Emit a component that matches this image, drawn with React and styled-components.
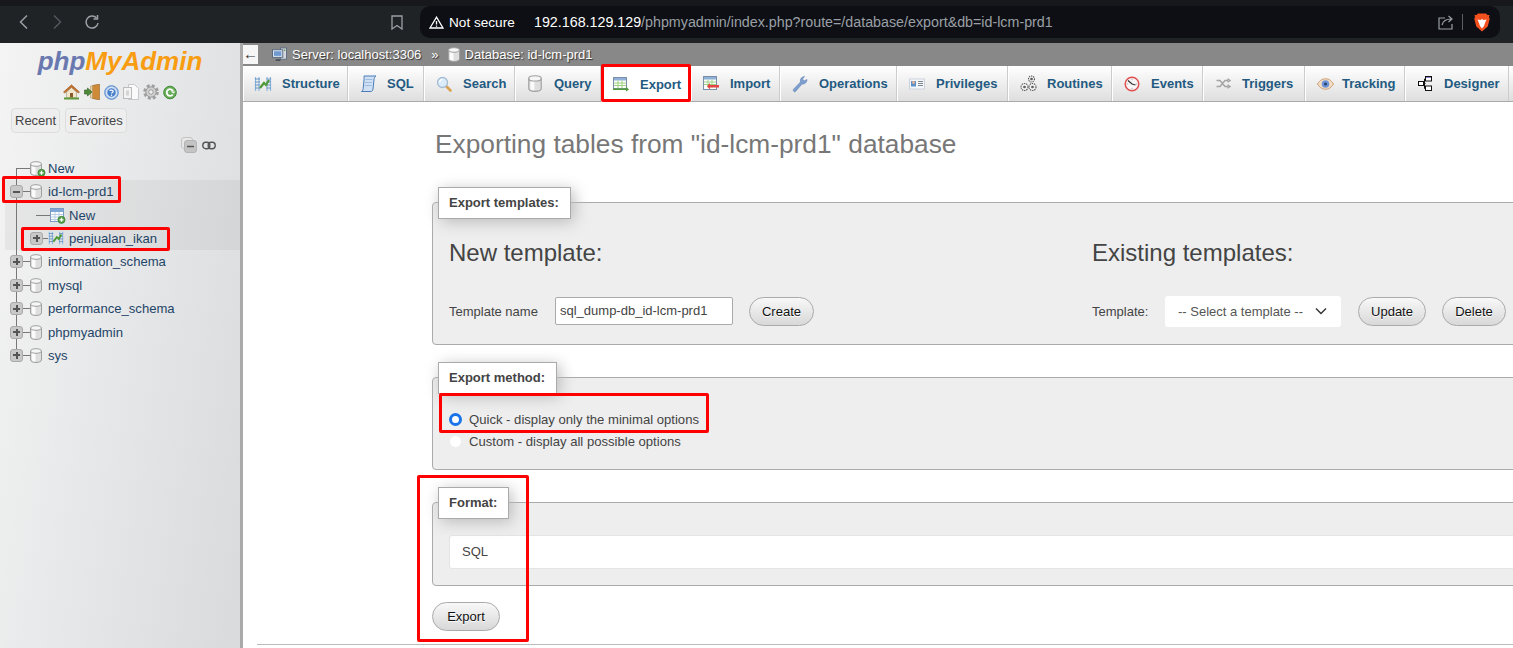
import styled, { createGlobalStyle } from "styled-components";

const GlobalStyle = createGlobalStyle`
  html, body {
    margin: 0;
    padding: 0;
    height: 100%;
    overflow: hidden;
    background: #fff;
    font-family: "Liberation Sans", Arial, sans-serif;
  }
  * { box-sizing: border-box; }
`;

/* ---------- drawn icons ---------- */

const DbIcon = ({ size = 15 }) => (
  <svg width={size - 3} height={size} viewBox="0 0 12 15">
    <path d="M.5 3v9c0 1.4 2.5 2.500 5.500 2.500s5.500-1.100 5.500-2.500V3z" fill="#dedede" stroke="#a0a0a0" />
    <path d="M2 4v8.500c1 .8 2.500 1 3.500 1V4z" fill="#fbfbfb" />
    <ellipse cx="6" cy="3" rx="5.500" ry="2.300" fill="#f6f6f6" stroke="#a0a0a0" />
  </svg>
);

const PlusBadge = () => (
  <svg width="16" height="16" viewBox="0 0 16 16" style={{ position: "absolute", left: 0, top: 0 }}>
    <circle cx="11.500" cy="11.800" r="3.600" fill="#4f9e45" stroke="#2f7a2a" strokeWidth=".6" />
    <path d="M9.500 11.800h4M11.500 9.800v4" stroke="#fff" strokeWidth="1.300" />
  </svg>
);

const TableIcon = () => (
  <svg width="14" height="14" viewBox="0 0 14 14">
    <rect x=".5" y=".5" width="13" height="13" fill="#fff" stroke="#7a9cc4" />
    <rect x="1" y="1" width="12" height="3" fill="#7fa6d6" />
    <path d="M1 6.500h12M1 9h12M1 11.500h12M5 4v9M9 4v9" stroke="#b6cde6" />
  </svg>
);

const StructureIcon = () => (
  <svg width="18" height="16" viewBox="0 0 18 16">
    <path d="M1.500 1v14M5 1v14M13 1v14M16.500 1v14" stroke="#8fb8e0" strokeWidth="1.200" />
    <path d="M1 3h5M1 6h5M1 9h5M1 12h5M12.500 3h4.500M12.500 6h4.500M12.500 9h4.500M12.500 12h4.500" stroke="#5b8cc0" strokeWidth=".9" />
    <path d="M6 12l4-5 2 2 3-5" stroke="#4f9a38" strokeWidth="2.200" fill="none" />
  </svg>
);

const SqlIcon = () => (
  <svg width="17" height="17" viewBox="0 0 17 17">
    <path d="M4 1h12c-1.500 1-1.800 2-2 4l-1 9c-.2 1.500-1 2.500-2 2.500H1.500c1-.5 1.500-1.500 1.700-3L4 5C4.200 3 4 2 4 1z" fill="#cfe0f4" stroke="#4b7db8" />
    <path d="M5.500 4.500h7M5 7.500h7M4.700 10.500h7" stroke="#9dbce0" />
  </svg>
);

const SearchIcon = () => (
  <svg width="16" height="16" viewBox="0 0 16 16">
    <path d="M10 10l4.500 4.500" stroke="#d8a050" strokeWidth="2.600" strokeLinecap="round" />
    <circle cx="6.500" cy="6.500" r="5" fill="#dcecfa" stroke="#a4bcd4" strokeWidth="1.300" />
    <path d="M3.500 6c.4-1.500 1.500-2.500 3-2.600" stroke="#fff" strokeWidth="1.200" fill="none" />
  </svg>
);

const ExportIcon = () => (
  <svg width="16" height="15" viewBox="0 0 16 15">
    <rect x=".5" y=".5" width="13" height="11" fill="#fff" stroke="#7c8fa8" />
    <rect x="1" y="1" width="12" height="2.500" fill="#8fb0d8" />
    <path d="M1 6h12M1 8.500h12M5 3.500v8M9 3.500v8" stroke="#9ed07f" />
    <path d="M0 11.500h13v-2l3 3-3 2v-1.500H0z" fill="#4f9a38" />
  </svg>
);

const ImportIcon = () => (
  <svg width="16" height="15" viewBox="0 0 16 15">
    <rect x=".5" y=".5" width="13" height="13" fill="#fff" stroke="#7c8fa8" />
    <rect x="1" y="1" width="12" height="2.500" fill="#8fb0d8" />
    <path d="M1 6h12M1 8.500h12M5 3.500v8M9 3.500v8" stroke="#9ed07f" />
    <path d="M16 9H7V7l-3 3.300L7 13.500V11.500h9z" fill="#e64545" />
  </svg>
);

const OperationsIcon = () => (
  <svg width="16" height="18" viewBox="0 0 16 18">
    <path d="M2 16.500c-1-1-1-1.800-.2-2.600L8.500 7C8 4.500 9 2 12.500 1.500L10.500 4l1.500 2 3-1.500C15 7.500 12.500 9.500 10 9l-6.500 7.500c-.5.500-1 .5-1.500 0z" fill="#7d9fd0" stroke="#5f7fb0" strokeWidth=".6" />
  </svg>
);

const PrivilegesIcon = () => (
  <svg width="16" height="12" viewBox="0 0 16 12">
    <rect x=".5" y="1" width="15" height="10" fill="#f4f6fa" stroke="#ccd2dc" />
    <rect x="2" y="3" width="5" height="5.500" fill="#5d8fc8" />
    <circle cx="4.500" cy="4.500" r="1.400" fill="#e8b48c" />
    <path d="M9 3.500h5M9 5.500h5M9 7.500h5" stroke="#7d8794" />
  </svg>
);

const RoutinesIcon = () => (
  <svg width="17" height="17" viewBox="0 0 17 17" fill="#f2f2f2" stroke="#555" strokeWidth="1.100">
    <circle cx="11.500" cy="4" r="3" strokeDasharray="1.400 .8" />
    <circle cx="4.500" cy="12" r="3.500" strokeDasharray="1.400 .8" />
    <circle cx="12.500" cy="12" r="3.500" strokeDasharray="1.400 .8" />
    <circle cx="11.500" cy="4" r=".8" />
    <circle cx="4.500" cy="12" r=".8" />
    <circle cx="12.500" cy="12" r=".8" />
  </svg>
);

const EventsIcon = () => (
  <svg width="16" height="16" viewBox="0 0 16 16">
    <circle cx="8" cy="8" r="6.800" fill="#f7f7f7" stroke="#e05050" strokeWidth="1.500" />
    <path d="M8 2.800v1.400M8 11.800v1.400M2.800 8h1.400M11.800 8h1.400" stroke="#aaa" />
    <path d="M4 4.500L8 8l3.500 1" stroke="#333" strokeWidth="1.300" fill="none" />
  </svg>
);

const TriggersIcon = () => (
  <svg width="15" height="11" viewBox="0 0 15 11" fill="none" stroke="#a4a4a4" strokeWidth="1.500">
    <path d="M.5 2.500h3.500l5 6h3M.5 8.500h3.500l5-6h3" />
    <path d="M11.500.8l2.500 1.700-2.500 1.700M11.500 6.800l2.500 1.700-2.500 1.700" />
  </svg>
);

const TrackingIcon = () => (
  <svg width="17" height="12" viewBox="0 0 17 12">
    <path d="M.5 6C3 2 5.500.8 8.500.8S14 2 16.500 6c-2.500 4-5 5.200-8 5.200S3 10 .5 6z" fill="#f3ddc4" stroke="#c89a72" />
    <circle cx="8.500" cy="6" r="3.800" fill="#6f94d6" />
    <circle cx="8.500" cy="6" r="1.500" fill="#26406e" />
  </svg>
);

const DesignerIcon = () => (
  <svg width="14" height="15" viewBox="0 0 14 15" fill="#fff" stroke="#111">
    <rect x="7.500" y=".5" width="6" height="4.500" />
    <rect x=".5" y="5.500" width="5" height="4" />
    <rect x="7.500" y="10" width="6" height="4.500" />
    <path d="M5.500 7.500h2M6.500 3v9.500h1M6.500 3h1" fill="none" />
    <rect x="8" y="1" width="5" height="1" fill="#8a86c8" stroke="none" />
  </svg>
);

const ServerIcon = () => (
  <svg width="15" height="15" viewBox="0 0 16 15">
    <rect x="9" y=".5" width="6.500" height="12" fill="#d4d8de" stroke="#5c6c80" />
    <rect x=".5" y="2.500" width="11" height="8" fill="#e8eef6" stroke="#53657c" />
    <rect x="2" y="4" width="8" height="5" fill="#6f9ad0" />
    <path d="M4 13.500h5" stroke="#3a4654" strokeWidth="1.600" />
    <circle cx="13.500" cy="3" r=".8" fill="#4f9a38" />
  </svg>
);

const HomeIcon = () => (
  <svg width="17" height="16" viewBox="0 0 17 16">
    <path d="M3.500 8l5-4.500 5 4.500v5.500h-10z" fill="#f2e6cc" stroke="#a89878" strokeWidth=".6" />
    <path d="M8.500 .8L.5 8l1.200 1 6.800-5.800L15.300 9l1.200-1z" fill="#c9742c" stroke="#8a4a18" strokeWidth=".5" />
    <rect x="7" y="9" width="3" height="4.500" fill="#8a5a2a" />
    <rect x="1" y="13.500" width="15" height="2" fill="#5e9a3a" />
  </svg>
);

const LogoutIcon = () => (
  <svg width="16" height="16" viewBox="0 0 16 16">
    <path d="M8.500 1.500L15.500 0v16l-7-1.500z" fill="#cf8a38" stroke="#8a5518" strokeWidth=".5" />
    <path d="M8.500 2h-2v12h2z" fill="#e9d4a8" stroke="#a88858" strokeWidth=".5" />
    <path d="M.5 6h3V4L8 8l-4.500 4v-2h-3z" fill="#4f8a3a" stroke="#2c5c20" strokeWidth=".6" />
  </svg>
);

const HelpIcon = () => (
  <svg width="15" height="15" viewBox="0 0 15 15">
    <circle cx="7.500" cy="7.500" r="6.800" fill="#a8c6ec" stroke="#5a88c8" />
    <circle cx="7.500" cy="7.500" r="4.800" fill="#4a80cc" stroke="#fff" />
    <path d="M5.800 6c.2-1.200 3.400-1.400 3.400.3 0 1.200-1.700 1.100-1.700 2.300" stroke="#fff" strokeWidth="1.200" fill="none" />
    <rect x="6.900" y="9.600" width="1.200" height="1.300" fill="#fff" />
  </svg>
);

const DocsIcon = () => (
  <svg width="16" height="16" viewBox="0 0 16 16">
    <path d="M5.500.5h6l4 4v11h-10z" fill="#fafafa" stroke="#c8c8c8" />
    <rect x=".5" y="3.500" width="8" height="11" fill="#f4f4f4" stroke="#bcbcbc" />
    <rect x="3" y="6.500" width="3" height="5" fill="#d4d4d4" />
  </svg>
);

const GearIcon = () => (
  <svg width="16" height="16" viewBox="0 0 16 16">
    <circle cx="8" cy="8" r="6.500" fill="none" stroke="#a0a0a0" strokeWidth="2.600" strokeDasharray="3 2.100" />
    <circle cx="8" cy="8" r="5.200" fill="#cfcfcf" stroke="#8c8c8c" strokeWidth=".8" />
    <circle cx="8" cy="8" r="2.200" fill="#f0f0f0" stroke="#8c8c8c" strokeWidth=".8" />
  </svg>
);

const ReloadIcon = () => (
  <svg width="14" height="15" viewBox="0 0 14 15">
    <circle cx="7" cy="7.500" r="6.300" fill="#67ad58" stroke="#3f8a34" />
    <path d="M10 6a3.300 3.300 0 1 0-.3 3.500" stroke="#fff" strokeWidth="1.800" fill="none" />
    <path d="M7.500 6.500h5v-1l-1.500 3z" fill="#fff" />
  </svg>
);

const CollapseIcon = () => (
  <svg width="16" height="16" viewBox="0 0 16 16">
    <rect x=".5" y=".5" width="11" height="11" rx="2.500" fill="#e8e8e8" stroke="#c4c4c4" />
    <rect x="3.500" y="3.500" width="12" height="12" rx="2.500" fill="#c4c4c4" stroke="#b4b4b4" />
    <path d="M6 9.500h7" stroke="#555" strokeWidth="1.500" />
  </svg>
);

const LinkIcon = () => (
  <svg width="14" height="9" viewBox="0 0 14 9" fill="none" stroke="#555" strokeWidth="1.400">
    <rect x=".8" y="1.300" width="7" height="6.400" rx="3" />
    <rect x="6.200" y="1.300" width="7" height="6.400" rx="3" />
  </svg>
);

const BraveIcon = () => (
  <svg width="16" height="19" viewBox="0 0 16 19">
    <path d="M4 .5h8l1.500 1.600L15.500 2 15 4l.7 2-2 7.500L8 18.500l-5.700-5L.3 6 1 4 .5 2l2 .1z" fill="#f4511e" />
    <path d="M3.500 6.500L6.500 7 8 6l1.500 1 3-.5L11 10l-1 3H6l-1-3z" fill="#fff" />
    <path d="M6 13l2 2.500 2-2.500z" fill="#fff" />
  </svg>
);

/* ---------- browser bar ---------- */

const Chrome = styled.header`
  height: 43px;
  background: #202326;
  border-top: 6px solid #16181b;
  display: flex;
  align-items: flex-start;
  color: #9aa0a6;
`;

const NavIcons = styled.div`
  width: 420px;
  height: 32px;
  display: flex;
  align-items: center;
`;

const NavButton = styled.svg`
  margin-left: ${({ $left }) => $left}px;
  flex: none;
`;

const UrlBar = styled.div`
  width: 1080px;
  height: 32px;
  background: #0e0f14;
  border-radius: 10px;
  display: flex;
  align-items: center;
  padding: 0 10px 0 9px;
`;

const NotSecure = styled.span`
  color: #fff;
  font-size: 13.600px;
  margin-left: 5px;
  width: 85px;
  flex: none;
  white-space: nowrap;
`;

const Url = styled.span`
  color: #9aa0a6;
  font-size: 14.280px;
  white-space: nowrap;
  flex: 1;

  b {
    color: #fff;
    font-weight: 400;
  }
`;

const UrlDivider = styled.span`
  width: 1px;
  height: 16px;
  background: #5c6066;
  margin: 0 11px 0 8px;
`;

/* ---------- page shell ---------- */

const Page = styled.div`
  position: relative;
  width: 1513px;
  height: 648px;
  overflow: hidden;
`;

const Body = styled.div`
  display: flex;
  height: 605px;
`;

const Sidebar = styled.aside`
  width: 243px;
  flex: none;
  background: linear-gradient(100deg, #f4f4f4, #d8dadc);
  border-right: 3px solid #aaa;
  display: flex;
  flex-direction: column;
  color: #235a81;
`;

const Logo = styled.div`
  height: 36px;
  text-align: center;
  font: italic 700 26px/36px "Liberation Sans", Arial, sans-serif;
  color: #f89d12;

  span {
    color: #6a78b0;
  }
`;

const NavLinks = styled.div`
  display: flex;
  justify-content: center;
  align-items: center;
  gap: 4px;
  height: 18px;
  margin-top: 4px;
`;

const SideTabs = styled.div`
  display: flex;
  gap: 5px;
  padding-left: 11px;
  margin-top: 7px;
`;

const SideTab = styled.div`
  height: 25px;
  padding: 0 3px;
  line-height: 23px;
  font-size: 13px;
  color: #444;
  background: #eee;
  border: 1px solid #ddd;
  border-radius: 4px;
`;

const TreeTools = styled.div`
  display: flex;
  align-items: center;
  justify-content: flex-end;
  gap: 5px;
  height: 18px;
  margin-top: 3px;
  padding-right: 24px;
`;

const Tree = styled.div`
  margin-top: 2.600px;
`;

const ExpandedGroup = styled.div`
  margin-left: 5px;
  background: rgba(0, 0, 0, 0.045);
`;

const TreeRow = styled.div`
  position: relative;
  height: 23.400px;
  display: flex;
  align-items: center;
  padding-left: ${({ $indent }) => $indent}px;
  font-size: 13.100px;
  color: #1e4568;
  white-space: nowrap;

  &::before {
    content: "";
    position: absolute;
    left: ${({ $lineX }) => $lineX}px;
    top: ${({ $lineTop }) => $lineTop}px;
    bottom: ${({ $lineBottom }) => $lineBottom}px;
    width: 1px;
    background: #777;
  }
`;

const Expander = styled.span`
  position: relative;
  z-index: 1;
  width: 13px;
  height: 13px;
  flex: none;
  background: #c8c8c8;
  border: 1px solid #aaa;
  border-radius: 3px;

  &::before {
    content: "";
    position: absolute;
    left: 2px;
    right: 2px;
    top: 4.500px;
    height: 2px;
    background: #555;
  }

  &::after {
    content: "";
    display: ${({ $open }) => ($open ? "none" : "block")};
    position: absolute;
    top: 2px;
    bottom: 2px;
    left: 4.500px;
    width: 2px;
    background: #555;
  }
`;

const Connector = styled.span`
  width: ${({ $w }) => $w}px;
  height: 1px;
  background: #777;
  flex: none;
`;

const NodeIcon = styled.span`
  position: relative;
  display: flex;
  flex: none;
  width: ${({ $w }) => $w}px;
  margin-right: ${({ $gap }) => $gap}px;
`;

/* ---------- right side ---------- */

const Main = styled.main`
  flex: 1;
  min-width: 0;
  overflow: hidden;
`;

const TopBar = styled.div`
  height: 23px;
  background: #888;
  display: flex;
  align-items: center;
  color: #fff;
  font-size: 13px;
  text-shadow: 1px 1px 1px #333;
  white-space: nowrap;
`;

const BackArrow = styled.span`
  width: 15px;
  height: 19px;
  background: #f6f6f6;
  color: #333;
  font-size: 15px;
  line-height: 18px;
  text-align: center;
  text-shadow: none;
  margin-right: 14px;
`;

const TopItem = styled.span`
  display: flex;
  align-items: center;
  gap: 5px;
  margin-right: ${({ $gap }) => $gap}px;
`;

const Tabs = styled.nav`
  display: flex;
  height: 36px;
  background: linear-gradient(#fff, #dedede);
  border-bottom: 1px solid #aaa;
`;

const Tab = styled.a`
  flex: none;
  display: flex;
  align-items: center;
  width: ${({ $w }) => $w}px;
  padding-left: 9px;
  font-size: 13px;
  font-weight: 700;
  color: #235a81;
  white-space: nowrap;
  border-right: 1px solid #ccc;
  box-shadow: inset 1px 0 0 #fff;
  background: ${({ $active }) => ($active ? "#fff" : "transparent")};
  height: ${({ $active }) => ($active ? "36px" : "auto")};
`;

const TabIcon = styled.span`
  width: 22px;
  flex: none;
  display: flex;
  justify-content: center;
  margin-right: ${({ $gap = 8 }) => $gap}px;
`;

const Content = styled.div`
  padding-left: 189px;
  width: 1500px;
`;

const Title = styled.h2`
  margin: 0;
  padding: 27px 0 0 3px;
  font-size: 26.300px;
  font-weight: 400;
  line-height: 30px;
  color: #777;
`;

const Fieldset = styled.section`
  height: ${({ $h }) => $h}px;
  margin-top: ${({ $top }) => $top}px;
  background: #eee;
  border: 1px solid #aaa;
  border-radius: 4px 0 0 4px;
  padding: 0 16px;
`;

const Legend = styled.div`
  display: inline-block;
  height: 32px;
  line-height: 29px;
  margin: -16px 0 0 -11px;
  padding: 0 11px 0 10px;
  background: #fff;
  border: 1px solid #aaa;
  font-size: 13px;
  font-weight: 700;
  color: #444;
  box-shadow: 3px 3px 15px #bbb;
  vertical-align: top;
`;

const TemplateColumns = styled.div`
  display: flex;
  margin-top: 18px;
`;

const TemplateColumn = styled.div`
  width: ${({ $w }) => $w}px;
  flex: none;
`;

const SubTitle = styled.h3`
  margin: 0;
  font-size: 24px;
  font-weight: 400;
  line-height: 28px;
  color: #444;
`;

const FormRow = styled.div`
  display: flex;
  align-items: center;
  height: 32px;
  margin-top: 28px;
  font-size: 13px;
  color: #444;
`;

const RowLabel = styled.span`
  width: ${({ $w }) => $w}px;
  flex: none;
`;

const TextInput = styled.div`
  width: 178px;
  height: 28px;
  line-height: 26px;
  padding-left: 4px;
  background: #fff;
  border: 1px solid #aaa;
  border-radius: 2px;
  font-size: 13px;
  color: #444;
`;

const Select = styled.div`
  width: 176px;
  height: 31px;
  display: flex;
  align-items: center;
  justify-content: space-between;
  padding: 0 14px 0 13px;
  background: #fff;
  border-radius: 3px;
  font-size: 13px;
  color: #555;
`;

const Button = styled.div`
  display: flex;
  align-items: center;
  justify-content: center;
  width: ${({ $w }) => $w}px;
  height: 29px;
  margin-left: ${({ $left = 0 }) => $left}px;
  flex: none;
  background: linear-gradient(#f8f8f8, #d8d8d8);
  border: 1px solid #aaa;
  border-radius: 15px;
  font-size: 13px;
  color: #111;
  text-shadow: 0 1px 0 #fff;
`;

const RadioList = styled.div`
  margin-top: 12px;
  font-size: 13.100px;
  color: #444;
`;

const RadioRow = styled.label`
  display: flex;
  align-items: center;
  gap: 7px;
  height: 22px;
`;

const Radio = styled.span`
  width: 13px;
  height: 13px;
  border-radius: 50%;
  flex: none;
  background: #fff;
  border: ${({ $on }) => ($on ? "3.500px solid #1a73e8" : "1px solid #eee")};
`;

const FormatValue = styled.div`
  height: 34px;
  margin-top: 14px;
  padding-left: 12px;
  line-height: 32px;
  background: #fff;
  border: 1px solid #e4e4e4;
  border-radius: 3px;
  font-size: 13px;
  color: #444;
`;

const ExportRow = styled.div`
  margin-top: 16px;
`;

const Rule = styled.hr`
  margin: 13px 0 0 -175px;
  border: 0;
  border-top: 1px solid #bbb;
`;

/* red boxes drawn over the screenshot */
const Mark = styled.div`
  position: absolute;
  left: ${({ $x }) => $x}px;
  top: ${({ $y }) => $y}px;
  width: ${({ $w }) => $w}px;
  height: ${({ $h }) => $h}px;
  border: 3px solid #f00;
  border-radius: 2px;
  pointer-events: none;
`;

const TABS = [
  { label: "Structure", width: 105, icon: <StructureIcon /> },
  { label: "SQL", width: 76, icon: <SqlIcon /> },
  { label: "Search", width: 91, icon: <SearchIcon /> },
  { label: "Query", width: 86, icon: <DbIcon size={17} /> },
  { label: "Export", width: 90, icon: <ExportIcon />, active: true },
  { label: "Import", width: 89, icon: <ImportIcon /> },
  { label: "Operations", width: 117, icon: <OperationsIcon /> },
  { label: "Privileges", width: 111, icon: <PrivilegesIcon /> },
  { label: "Routines", width: 104, icon: <RoutinesIcon /> },
  { label: "Events", width: 91, icon: <EventsIcon /> },
  { label: "Triggers", width: 102, icon: <TriggersIcon /> },
  { label: "Tracking", width: 100, icon: <TrackingIcon />, gap: 6 },
  { label: "Designer", width: 104, icon: <DesignerIcon /> },
];

const MARKS = [
  [601, 64, 90, 38],
  [2, 176, 119, 27],
  [21, 227, 149, 24],
  [439, 393, 270, 40],
  [417, 475, 112, 167],
];

const DatabaseRow = ({ name }) => (
  <TreeRow $indent={10} $lineX={16} $lineTop={0} $lineBottom={name === "sys" ? 12 : 0}>
    <Expander />
    <Connector $w={7} />
    <NodeIcon $w={12} $gap={6}>
      <DbIcon />
    </NodeIcon>
    {name}
  </TreeRow>
);

export default function App() {
  return (
    <Page>
      <GlobalStyle />
      <Chrome>
        <NavIcons>
          <NavButton $left={18} width="11" height="16" viewBox="0 0 11 16" fill="none" stroke="#9aa0a6" strokeWidth="1.500">
            <path d="M9 1.500L2.500 8 9 14.500" />
          </NavButton>
          <NavButton $left={23} width="11" height="16" viewBox="0 0 11 16" fill="none" stroke="#53575c" strokeWidth="1.500">
            <path d="M2 1.500L8.500 8 2 14.500" />
          </NavButton>
          <NavButton $left={21} width="16" height="16" viewBox="0 0 16 16" fill="none" stroke="#9aa0a6" strokeWidth="1.500">
            <path d="M14 9a6 6 0 1 1-1.500-5" />
            <path d="M13.500 1v4h-4" />
          </NavButton>
          <NavButton $left={291} width="12" height="15" viewBox="0 0 12 15" fill="none" stroke="#9aa0a6" strokeWidth="1.300">
            <path d="M1 1h10v13l-5-3.500L1 14z" />
          </NavButton>
        </NavIcons>
        <UrlBar>
          <svg width="15" height="13" viewBox="0 0 15 13" fill="none" stroke="#fff" strokeWidth="1.300">
            <path d="M7.500 1.200L14 12H1z" />
            <path d="M7.500 5v3.500M7.500 9.500v1.200" />
          </svg>
          <NotSecure>Not secure</NotSecure>
          <Url>
            <b>192.168.129.129</b>/phpmyadmin/index.php?route=/database/export&amp;db=id-lcm-prd1
          </Url>
          <svg width="16" height="15" viewBox="0 0 16 15" fill="none" stroke="#9aa0a6" strokeWidth="1.200">
            <path d="M7 3H1v11h13V9" />
            <path d="M4 10c1-4 4-6 9-6M10.500 1L14 4l-3.500 3" />
          </svg>
          <UrlDivider />
          <BraveIcon />
        </UrlBar>
      </Chrome>

      <Body>
        <Sidebar>
          <Logo>
            <span>php</span>MyAdmin
          </Logo>
          <NavLinks>
            <HomeIcon />
            <LogoutIcon />
            <HelpIcon />
            <DocsIcon />
            <GearIcon />
            <ReloadIcon />
          </NavLinks>
          <SideTabs>
            <SideTab>Recent</SideTab>
            <SideTab>Favorites</SideTab>
          </SideTabs>
          <TreeTools>
            <CollapseIcon />
            <LinkIcon />
          </TreeTools>
          <Tree>
            <TreeRow $indent={16} $lineX={16} $lineTop={12} $lineBottom={0}>
              <Connector $w={14} />
              <NodeIcon $w={12} $gap={6}>
                <DbIcon />
                <PlusBadge />
              </NodeIcon>
              New
            </TreeRow>
            <ExpandedGroup>
              <TreeRow $indent={5} $lineX={11} $lineTop={0} $lineBottom={0}>
                <Expander $open />
                <Connector $w={7} />
                <NodeIcon $w={12} $gap={6}>
                  <DbIcon />
                </NodeIcon>
                id-lcm-prd1
              </TreeRow>
              <TreeRow $indent={31} $lineX={11} $lineTop={0} $lineBottom={0}>
                <Connector $w={14} />
                <NodeIcon $w={14} $gap={5}>
                  <TableIcon />
                  <PlusBadge />
                </NodeIcon>
                New
              </TreeRow>
              <TreeRow $indent={25} $lineX={11} $lineTop={0} $lineBottom={0}>
                <Expander />
                <Connector $w={5} />
                <NodeIcon $w={16} $gap={5}>
                  <StructureIcon />
                </NodeIcon>
                penjualan_ikan
              </TreeRow>
            </ExpandedGroup>
            <DatabaseRow name="information_schema" />
            <DatabaseRow name="mysql" />
            <DatabaseRow name="performance_schema" />
            <DatabaseRow name="phpmyadmin" />
            <DatabaseRow name="sys" />
          </Tree>
        </Sidebar>

        <Main>
          <TopBar>
            <BackArrow>←</BackArrow>
            <TopItem $gap={10}>
              <ServerIcon />
              Server: localhost:3306
            </TopItem>
            <TopItem $gap={9}>»</TopItem>
            <TopItem $gap={0}>
              <DbIcon size={15} />
              Database: id-lcm-prd1
            </TopItem>
          </TopBar>
          <Tabs>
            {TABS.map(({ label, width, icon, active, gap }) => (
              <Tab key={label} $w={width} $active={active}>
                <TabIcon $gap={gap}>{icon}</TabIcon>
                {label}
              </Tab>
            ))}
          </Tabs>
          <Content>
            <Title>Exporting tables from "id-lcm-prd1" database</Title>
            <Fieldset $h={143} $top={43}>
              <Legend>Export templates:</Legend>
              <TemplateColumns>
                <TemplateColumn $w={643}>
                  <SubTitle>New template:</SubTitle>
                  <FormRow>
                    <RowLabel $w={106}>Template name</RowLabel>
                    <TextInput>sql_dump-db_id-lcm-prd1</TextInput>
                    <Button $w={65} $left={16}>Create</Button>
                  </FormRow>
                </TemplateColumn>
                <TemplateColumn $w={440}>
                  <SubTitle>Existing templates:</SubTitle>
                  <FormRow>
                    <RowLabel $w={73}>Template:</RowLabel>
                    <Select>
                      -- Select a template --
                      <svg width="12" height="8" viewBox="0 0 12 8" fill="none" stroke="#333" strokeWidth="1.400">
                        <path d="M1 1.500l5 5 5-5" />
                      </svg>
                    </Select>
                    <Button $w={68} $left={17}>Update</Button>
                    <Button $w={64} $left={16}>Delete</Button>
                  </FormRow>
                </TemplateColumn>
              </TemplateColumns>
            </Fieldset>
            <Fieldset $h={93} $top={32}>
              <Legend>Export method:</Legend>
              <RadioList>
                <RadioRow>
                  <Radio $on />
                  Quick - display only the minimal options
                </RadioRow>
                <RadioRow>
                  <Radio />
                  Custom - display all possible options
                </RadioRow>
              </RadioList>
            </Fieldset>
            <Fieldset $h={84} $top={32}>
              <Legend>Format:</Legend>
              <FormatValue>SQL</FormatValue>
            </Fieldset>
            <ExportRow>
              <Button $w={68}>Export</Button>
            </ExportRow>
            <Rule />
          </Content>
        </Main>
      </Body>

      {MARKS.map(([x, y, w, h]) => (
        <Mark key={x} $x={x} $y={y} $w={w} $h={h} />
      ))}
    </Page>
  );
}
